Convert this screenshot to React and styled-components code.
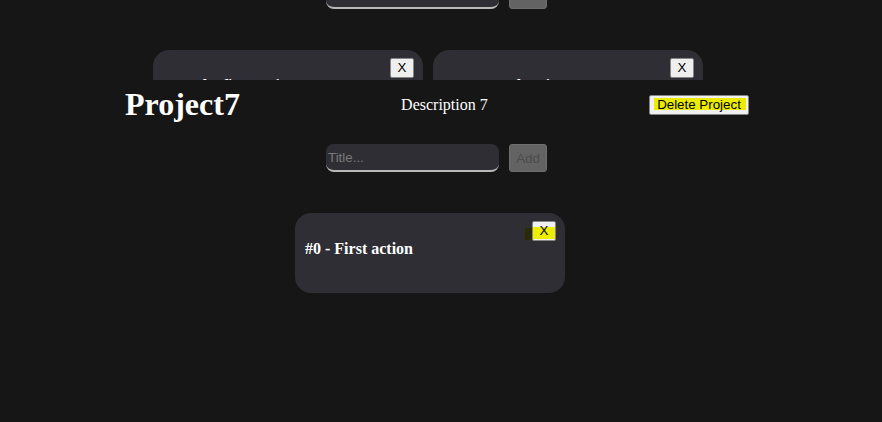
import React from "react";
import styled, { createGlobalStyle } from "styled-components";

const GlobalStyle = createGlobalStyle`
  html, body {
    margin: 0;
    padding: 0;
    background-color: #161616;
    overflow: hidden;
  }
`;

const backActions = [
  { id: 0, title: "#0 - The first action" },
  { id: 1, title: "#1 - Second action" },
];

const projectActions = [{ id: 0, title: "#0 - First action" }];

const App = () => {
  return (
    <>
      <GlobalStyle />
      <Page>
        <Marker />
        <InputRow $offset="-19px">
          <TitleInput placeholder="Title..." />
          <AddButton disabled>Add</AddButton>
        </InputRow>
        <Board $width="856px">
          {backActions.map((action) => (
            <ActionCard key={action.id}>
              <CloseButton>X</CloseButton>
              <ActionTitle>{action.title}</ActionTitle>
            </ActionCard>
          ))}
        </Board>
      </Page>

      <ProjectOverlay>
        <ProjectHeader>
          <ProjectName>Project7</ProjectName>
          <ProjectDescription>Description 7</ProjectDescription>
          <DeleteButton>Delete Project</DeleteButton>
        </ProjectHeader>
        <InputRow $offset="21px">
          <TitleInput placeholder="Title..." />
          <AddButton disabled>Add</AddButton>
        </InputRow>
        <Board $width="860px">
          {projectActions.map((action) => (
            <ActionCard key={action.id}>
              <CloseButton $highlight>X</CloseButton>
              <ActionTitle>{action.title}</ActionTitle>
            </ActionCard>
          ))}
        </Board>
      </ProjectOverlay>
    </>
  );
};

// Styled components
const Page = styled.div`
  position: relative;
  min-height: 422px;
  font-family: "Liberation Serif", "Times New Roman", serif;
`;

const Marker = styled.span`
  position: absolute;
  left: 44px;
  top: 2px;
  width: 3px;
  height: 3px;
  border-radius: 50%;
  background-color: #d40000;
`;

const InputRow = styled.div`
  display: flex;
  gap: 10px;
  margin-top: ${(p) => p.$offset};
  padding-left: 326px;
  height: 28px;
`;

const TitleInput = styled.input`
  box-sizing: border-box;
  width: 173px;
  height: 28px;
  padding: 1px 2px 0;
  border: none;
  border-bottom: 2px solid #b9b9b9;
  border-radius: 8px;
  background-color: #2f2e34;
  color: #ddd;
  font-family: "Liberation Sans", Arial, sans-serif;
  font-size: 13.333px;
  outline: none;

  &::placeholder {
    color: #7a7a7a;
  }
`;

const AddButton = styled.button`
  box-sizing: border-box;
  width: 38px;
  height: 28px;
  padding: 0 6px;
  border: 1px solid #6e6e6e;
  border-radius: 3px;
  background-color: #636363;
  color: #4b4b4b;
  font-family: "Liberation Sans", Arial, sans-serif;
  font-size: 13.333px;
`;

const Board = styled.div`
  display: flex;
  flex-wrap: wrap;
  justify-content: center;
  gap: 10px;
  width: ${(p) => p.$width};
  margin-top: 41px;
`;

const ActionCard = styled.div`
  position: relative;
  box-sizing: border-box;
  width: 270px;
  height: 80px;
  padding: 27px 10px 0;
  border-radius: 16px;
  background-color: #2f2e34;
  color: #fff;
`;

const ActionTitle = styled.h4`
  margin: 0;
  font-family: "Liberation Serif", "Times New Roman", serif;
  font-size: 16px;
  font-weight: bold;
  line-height: normal;
`;

const CloseButton = styled.button`
  position: absolute;
  top: 8px;
  right: 9px;
  box-sizing: border-box;
  width: 24px;
  height: 20px;
  padding: 0;
  border: 1px solid #858585;
  border-radius: 2px;
  background: ${(p) =>
    p.$highlight
      ? "linear-gradient(#eded00, #eded00) 0 5px / 100% 12px no-repeat, #f0f0f0"
      : "#efefef"};
  color: #000;
  font-family: "Liberation Sans", Arial, sans-serif;
  font-size: 13.333px;
  line-height: 18px;

  &::before {
    content: "";
    display: ${(p) => (p.$highlight ? "block" : "none")};
    position: absolute;
    left: -8px;
    top: 6px;
    width: 7px;
    height: 12px;
    background-color: #2b2a06;
  }
`;

const ProjectOverlay = styled.div`
  position: fixed;
  top: 80px;
  left: 0;
  right: 0;
  bottom: 0;
  padding-top: 6px;
  background-color: #161616;
  font-family: "Liberation Serif", "Times New Roman", serif;
`;

const ProjectHeader = styled.div`
  display: flex;
  justify-content: space-between;
  align-items: center;
  width: 624px;
  margin-left: 125px;
`;

const ProjectName = styled.h1`
  margin: 0;
  color: #fff;
  font-size: 32px;
  font-weight: bold;
  line-height: normal;
`;

const ProjectDescription = styled.p`
  margin: 0;
  color: #fff;
  font-size: 16px;
`;

const DeleteButton = styled.button`
  box-sizing: border-box;
  width: 100px;
  height: 20px;
  padding: 0 6px;
  border: 1px solid #858585;
  border-radius: 2px;
  background: linear-gradient(#ecec00, #ecec00) 4px 2px / calc(100% - 6px) 12px
      no-repeat,
    #f0f0f0;
  color: #000;
  font-family: "Liberation Sans", Arial, sans-serif;
  font-size: 13.333px;
  line-height: 18px;
  white-space: nowrap;
`;

export default App;
